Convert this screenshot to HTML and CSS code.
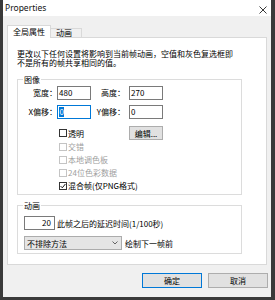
FILE: index.html
```html
<!DOCTYPE html>
<html lang="zh">
<head>
<meta charset="utf-8">
<title>Properties</title>
<link rel="stylesheet" href="styles.css">
</head>
<body>
<div class="window">
  <div class="titlebar">
    <span class="title">Properties</span>
    <svg class="close" width="8" height="8" viewBox="0 0 8 8"><path d="M0.5 0.5L7.5 7.5M7.5 0.5L0.5 7.5" stroke="#222" stroke-width="0.9" fill="none"/></svg>
  </div>
  <div class="client">
    <div class="tabs">
      <div class="tab active">全局属性</div>
      <div class="tab">动画</div>
      <div class="tab-fill"></div>
    </div>
    <div class="panel">
      <p class="desc">更改以下任何设置将影响到当前帧动画，空值和灰色复选框即<br>不是所有的帧共享相同的值。</p>

      <fieldset class="group">
        <legend>图像</legend>
        <div class="field-row">
          <span class="lbl">宽度：</span><span class="input">480</span>
          <span class="lbl lbl2">高度：</span><span class="input">270</span>
        </div>
        <div class="field-row second">
          <span class="lbl">X偏移：</span><span class="input focus"><span class="sel">0</span></span>
          <span class="lbl lbl2">Y偏移：</span><span class="input">0</span>
        </div>
        <div class="check-row first">
          <span class="check"><span class="box"></span>透明</span>
          <span class="btn edit">编辑...</span>
        </div>
        <div class="check-row"><span class="check disabled"><span class="box"></span>交错</span></div>
        <div class="check-row"><span class="check disabled"><span class="box"></span>本地调色板</span></div>
        <div class="check-row"><span class="check disabled"><span class="box"></span>24位色彩数据</span></div>
        <div class="check-row"><span class="check"><span class="box"><svg width="6" height="6" viewBox="0 0 6 6"><path d="M0.6 3.1L2.3 4.8L5.4 1" stroke="#111" stroke-width="1" fill="none"/></svg></span>混合帧(仅PNG格式)</span></div>
      </fieldset>

      <fieldset class="group anim">
        <legend>动画</legend>
        <div class="anim-row">
          <span class="input delay">20</span><span class="anim-text">此帧之后的延迟时间(1/100秒)</span>
        </div>
        <div class="anim-row second">
          <span class="select">不排除方法<svg class="chev" width="6" height="4" viewBox="0 0 6 4"><path d="M0.5 0.5L3 3L5.5 0.5" stroke="#555" stroke-width="0.9" fill="none"/></svg></span><span class="anim-text sel-text">绘制下一帧前</span>
        </div>
      </fieldset>
    </div>
    <div class="buttons">
      <span class="btn default">确定</span>
      <span class="btn">取消</span>
    </div>
  </div>
</div>
</body>
</html>
```

FILE: styles.css
```css
html, body {
  margin: 0;
  padding: 0;
}
body {
  width: 275px;
  height: 300px;
  background: #3a3a3a;
  font-family: "Noto Sans CJK SC", "Noto Sans", sans-serif;
  font-size: 8px;
  line-height: 9px;
  color: #000;
  overflow: hidden;
}
.window {
  margin-left: 3px;
  width: 268px;
  height: 297px;
  display: flex;
  flex-direction: column;
  background: #f0f0f0;
}
.titlebar {
  height: 16px;
  flex: 0 0 16px;
  background: #fff;
  display: flex;
  align-items: center;
  justify-content: space-between;
}
.title {
  font-family: "Noto Sans", sans-serif;
  font-size: 8.5px;
  line-height: 16px;
  padding-left: 2px;
  color: #111;
}
.close {
  align-self: flex-start;
  margin-top: 6px;
  margin-right: 4px;
}
.client {
  flex: 1;
  display: flex;
  flex-direction: column;
}
.tabs {
  display: flex;
  align-items: flex-end;
  margin: 9px 0 0 4px;
  width: 260px;
  height: 13px;
}
.tab {
  box-sizing: border-box;
  height: 10px;
  line-height: 8px;
  padding: 0 9px 0 5px;
  background: #f0f0f0;
  border: 1px solid #d9d9d9;
  border-left: none;
  white-space: nowrap;
}
.tab.active {
  height: 13px;
  line-height: 12px;
  padding: 0 5px;
  background: #fff;
  border-left: 1px solid #d9d9d9;
  border-bottom: none;
}
.tab-fill {
  flex: 1;
  height: 1px;
  background: #d9d9d9;
}
.panel {
  box-sizing: border-box;
  margin-left: 4px;
  width: 260px;
  background: #fff;
  border: 1px solid #d9d9d9;
  border-top: none;
  padding: 11px 0 10px 9px;
}
.desc {
  margin: 0;
  white-space: nowrap;
}
.group {
  box-sizing: border-box;
  width: 225px;
  min-inline-size: 0;
  margin: 8px 0 0 0;
  padding: 0 0 2px 5px;
  border: 1px solid #dcdcdc;
}
.group legend {
  padding: 0 1px;
  line-height: 9px;
}
.group.anim {
  margin-top: 6px;
  padding-bottom: 3px;
}
.field-row {
  display: flex;
  height: 14px;
  margin-top: 2px;
}
.field-row.second {
  margin-top: 5px;
}
.lbl {
  width: 34px;
  text-align: right;
  line-height: 14px;
  white-space: nowrap;
}
.lbl.lbl2 {
  width: 34px;
  margin-left: 0;
  padding-right: 4px;
}
.input {
  box-sizing: border-box;
  width: 34px;
  height: 14px;
  border: 1px solid #7a7a7a;
  background: #fff;
  padding-left: 1px;
  line-height: 12px;
  white-space: nowrap;
}
.input.focus {
  border-color: #0078d7;
  display: flex;
  align-items: stretch;
  padding: 1px 0 1px 1px;
}
.sel {
  background: #0078d7;
  color: #fff;
  padding: 0 0.5px;
  line-height: 10px;
}
.check-row {
  display: flex;
  align-items: center;
  height: 13px;
  padding-left: 36px;
}
.check-row.first {
  height: 14px;
  margin-top: 7px;
}
.check {
  display: flex;
  align-items: center;
  flex: 0 0 70px;
  white-space: nowrap;
}
.box {
  box-sizing: border-box;
  width: 8px;
  height: 8px;
  border: 1px solid #333;
  background: #fff;
  margin-right: 1px;
  display: flex;
  align-items: center;
  justify-content: center;
}
.check.disabled {
  color: #a0a0a0;
}
.check.disabled .box {
  border-color: #c4c4c4;
}
.btn {
  box-sizing: border-box;
  display: flex;
  align-items: center;
  justify-content: center;
  background: #e1e1e1;
  border: 1px solid #adadad;
  white-space: nowrap;
}
.btn.edit {
  width: 34px;
  height: 14px;
}
.anim-row {
  display: flex;
  align-items: center;
  height: 14px;
  margin-top: 6px;
  padding-left: 1px;
}
.input.delay {
  width: 31px;
  text-align: right;
  padding: 0 3px 0 0;
}
.anim-text {
  margin-left: 2px;
  white-space: nowrap;
}
.select {
  box-sizing: border-box;
  width: 98px;
  height: 14px;
  display: flex;
  align-items: center;
  justify-content: space-between;
  padding: 0 3px 0 2px;
  background: #e5e5e5;
  border: 1px solid #acacac;
}
.anim-text.sel-text {
  margin-left: 3px;
}
.buttons {
  display: flex;
  justify-content: flex-end;
  gap: 6px;
  margin-top: 8px;
  padding-right: 3px;
}
.buttons .btn {
  width: 60px;
  height: 15px;
}
.buttons .btn.default {
  border-color: #0078d7;
}
```
